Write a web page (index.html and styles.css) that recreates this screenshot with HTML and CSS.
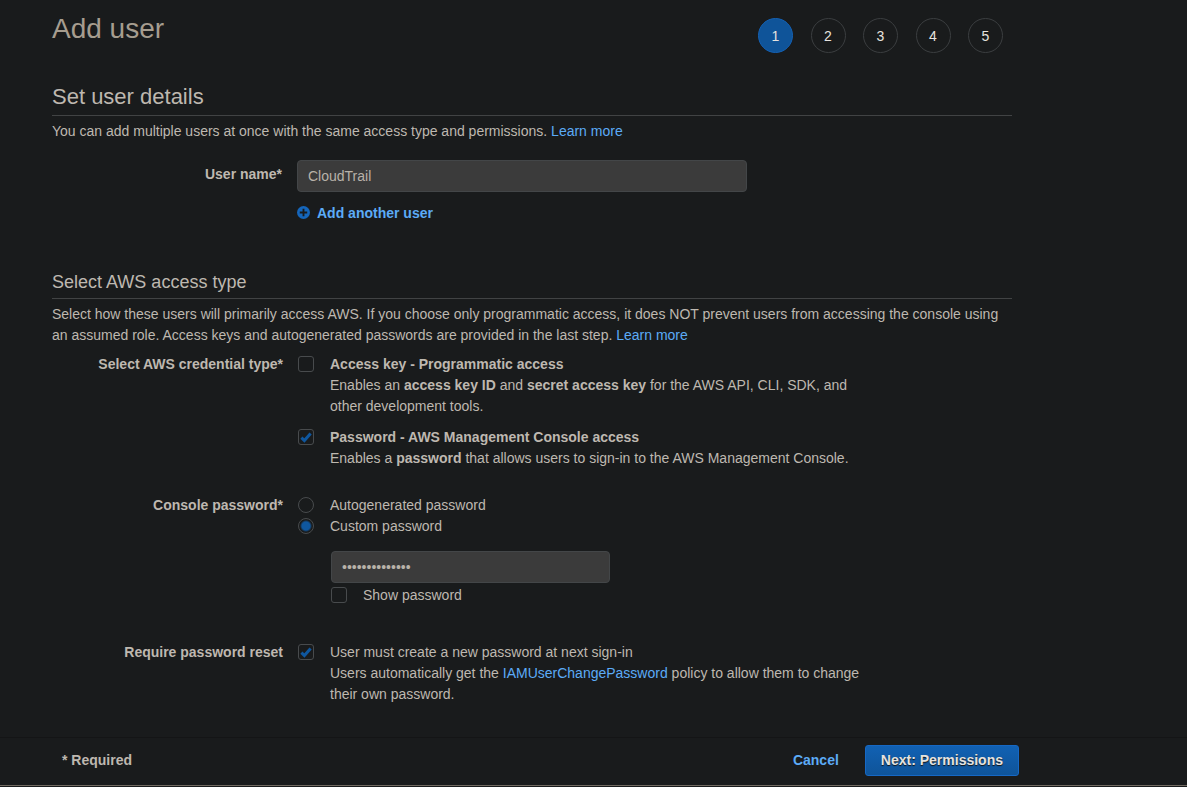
FILE: index.html
```html
<!DOCTYPE html>
<html lang="en">
<head>
<meta charset="utf-8">
<meta name="viewport" content="width=device-width, initial-scale=1">
<title>Add user</title>
<link rel="stylesheet" href="styles.css">
</head>
<body>
<form class="wizard">
  <main class="content">
    <header class="page-header">
      <h1 class="page-title">Add user</h1>
      <ol class="steps">
        <li class="step step-active" aria-current="step">1</li>
        <li class="step">2</li>
        <li class="step">3</li>
        <li class="step">4</li>
        <li class="step">5</li>
      </ol>
    </header>

    <section class="details">
      <h2 class="section-title">Set user details</h2>
      <p class="intro">You can add multiple users at once with the same access type and permissions. <a class="link" href="#">Learn more</a></p>
      <div class="row row-username">
        <label class="row-label row-label-input" for="username">User name*</label>
        <div class="row-field">
          <input class="text-input" id="username" type="text" value="CloudTrail">
          <button class="add-user" type="button">
            <svg class="add-icon" viewBox="0 0 14 14" aria-hidden="true"><circle class="add-disc" cx="7" cy="7" r="7"/><path class="add-plus" d="M7 3v8M3 7h8"/></svg>
            Add another user
          </button>
        </div>
      </div>
    </section>

    <section class="access">
      <h3 class="section-title subsection-title">Select AWS access type</h3>
      <p class="intro">Select how these users will primarily access AWS. If you choose only programmatic access, it does NOT prevent users from accessing the console using an assumed role. Access keys and autogenerated passwords are provided in the last step. <a class="link" href="#">Learn more</a></p>

      <div class="row row-credential" role="group" aria-labelledby="credential-label">
        <span class="row-label" id="credential-label">Select AWS credential type*</span>
        <div class="row-field options">
          <div class="option">
            <span class="tick"><input class="tick-box" id="access-key" type="checkbox"><svg class="tick-mark" viewBox="0 0 16 16" aria-hidden="true"><path d="M3.4 8.6l3 3 6.2-7"/></svg></span>
            <label class="option-text" for="access-key"><b>Access key - Programmatic access</b><br>Enables an <b>access key ID</b> and <b>secret access key</b> for the AWS API, CLI, SDK, and other development tools.</label>
          </div>
          <div class="option">
            <span class="tick"><input class="tick-box" id="console-access" type="checkbox" checked><svg class="tick-mark" viewBox="0 0 16 16" aria-hidden="true"><path d="M3.4 8.6l3 3 6.2-7"/></svg></span>
            <label class="option-text" for="console-access"><b>Password - AWS Management Console access</b><br>Enables a <b>password</b> that allows users to sign-in to the AWS Management Console.</label>
          </div>
        </div>
      </div>

      <div class="row row-password" role="group" aria-labelledby="password-label">
        <span class="row-label" id="password-label">Console password*</span>
        <div class="row-field">
          <div class="option">
            <input class="radio" id="auto-password" type="radio" name="password-type">
            <label class="option-text" for="auto-password">Autogenerated password</label>
          </div>
          <div class="option">
            <input class="radio" id="custom-password" type="radio" name="password-type" checked>
            <label class="option-text" for="custom-password">Custom password</label>
          </div>
          <div class="custom">
            <input class="text-input" type="password" value="CloudTrail1234" aria-label="Custom password">
            <div class="option option-show">
              <span class="tick"><input class="tick-box" id="show-password" type="checkbox"><svg class="tick-mark" viewBox="0 0 16 16" aria-hidden="true"><path d="M3.4 8.6l3 3 6.2-7"/></svg></span>
              <label class="option-text" for="show-password">Show password</label>
            </div>
          </div>
        </div>
      </div>

      <div class="row row-reset" role="group" aria-labelledby="reset-label">
        <span class="row-label" id="reset-label">Require password reset</span>
        <div class="row-field">
          <div class="option">
            <span class="tick"><input class="tick-box" id="reset" type="checkbox" checked><svg class="tick-mark" viewBox="0 0 16 16" aria-hidden="true"><path d="M3.4 8.6l3 3 6.2-7"/></svg></span>
            <div class="option-text"><label for="reset">User must create a new password at next sign-in</label><br>Users automatically get the <a class="link" href="#">IAMUserChangePassword</a> policy to allow them to change their own password.</div>
          </div>
        </div>
      </div>
    </section>
  </main>

  <footer class="footer">
    <div class="footer-inner">
      <span class="required">* Required</span>
      <a class="link cancel" href="#">Cancel</a>
      <button class="next" type="button">Next: Permissions</button>
    </div>
  </footer>
</form>
</body>
</html>
```
FILE: styles.css
```css
* {
  box-sizing: border-box;
}

body {
  margin: 0;
  background: #191b1c;
  color: #beb8b0;
  font-family: "Liberation Sans", Arial, sans-serif;
  font-size: 14px;
  line-height: 21px;
}

h1, h2, h3, p, ol {
  margin: 0;
  padding: 0;
  font-weight: 400;
}

button, input {
  margin: 0;
  font: inherit;
}

.content {
  max-width: 1064px;
  padding: 8px 52px 32px;
}

.page-header {
  display: flex;
  justify-content: space-between;
  align-items: flex-start;
  padding-right: 9px;
}

.page-title {
  color: #a69d8f;
  font-size: 28px;
  line-height: 42px;
}

.steps {
  display: flex;
  justify-content: space-between;
  width: 245px;
  padding-top: 10px;
  list-style: none;
}

.step {
  width: 35px;
  height: 35px;
  border: 1px solid #3b3e40;
  border-radius: 50%;
  color: #e6e3df;
  line-height: 35px;
  text-align: center;
}

.step-active {
  border-color: #1461b4;
  background: #0f5499;
}

.section-title {
  margin-bottom: 5px;
  padding-bottom: 3px;
  border-bottom: 1px solid #414344;
  font-size: 22px;
  line-height: 30px;
}

.subsection-title {
  font-size: 18px;
  line-height: 26px;
}

.details {
  padding-top: 29px;
}

.access {
  padding-top: 45px;
}

.link {
  color: #5cabf7;
  text-decoration: none;
}

.row {
  display: grid;
  grid-template-columns: 231px minmax(0, 573px);
  column-gap: 15px;
}

.row-username {
  grid-template-columns: 230px minmax(0, 450px);
  padding-top: 18px;
}

.row-credential {
  padding-top: 8px;
}

.row-password {
  padding-top: 26px;
}

.row-reset {
  padding-top: 36px;
}

.row-label {
  font-weight: 700;
  text-align: right;
}

.row-label-input {
  padding-top: 4px;
}

.text-input {
  display: block;
  width: 100%;
  height: 32px;
  padding: 0 10px;
  border: 1px solid #434648;
  border-radius: 4px;
  outline: 0;
  background: #3b3b3b;
  color: #b8b2a9;
}

.add-user {
  display: flex;
  align-items: center;
  gap: 7px;
  margin-top: 11px;
  padding: 0;
  border: 0;
  background: none;
  color: #5cabf7;
  font-weight: 700;
}

.add-icon {
  width: 13px;
  height: 13px;
  margin-bottom: 2px;
}

.add-disc {
  fill: #1566bb;
}

.add-plus {
  stroke: #191b1c;
  stroke-width: 2;
}

.options {
  display: grid;
  row-gap: 10px;
}

.option {
  display: grid;
  grid-template-columns: 16px minmax(0, 1fr);
  column-gap: 16px;
}

.tick {
  display: grid;
  height: 16px;
  margin-top: 2px;
}

.tick-box,
.radio {
  appearance: none;
  width: 16px;
  height: 16px;
  border: 1px solid #484b4d;
}

.tick-box {
  grid-area: 1 / 1;
  border-radius: 3px;
}

.tick-mark {
  grid-area: 1 / 1;
  width: 16px;
  height: 16px;
  fill: none;
  stroke: #0f579f;
  stroke-width: 3;
  pointer-events: none;
  visibility: hidden;
}

.tick-box:checked + .tick-mark {
  visibility: visible;
}

.radio {
  margin-top: 2px;
  border-radius: 50%;
}

.radio:checked {
  background: radial-gradient(circle, #0f579f 4px, transparent 6px);
}

.custom {
  width: 312px;
  max-width: 100%;
  padding: 14px 0 0 33px;
}

.option-show {
  margin-top: 2px;
}

.footer {
  border-top: 1px solid #141516;
  border-bottom: 1px solid #716a61;
}

.footer-inner {
  display: flex;
  align-items: center;
  max-width: 1071px;
  padding: 7px 52px 9px 62px;
  font-weight: 700;
}

.required {
  margin-right: auto;
}

.cancel {
  margin-right: 26px;
}

.next {
  height: 31px;
  padding: 0 15px;
  border: 1px solid #1668c4;
  border-radius: 3px;
  background: linear-gradient(#1161b3, #0f5499);
  color: #e6e3df;
  font-weight: 700;
  text-shadow: 0 1px 1px #101214;
}
```
